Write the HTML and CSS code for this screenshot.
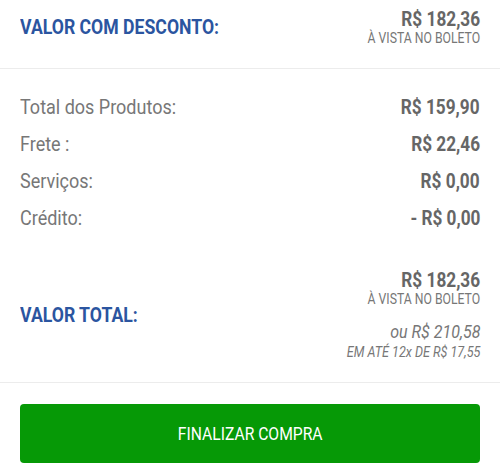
FILE: index.html
```html
<!DOCTYPE html>
<html lang="pt-BR">
<head>
    <meta charset="UTF-8">
    <meta name="viewport" content="width=device-width, initial-scale=1.0">
    <title>Resumo do pedido</title>
    <link rel="stylesheet" href="styles.css">
</head>
<body>
    <main class="summary">
        <section class="summary-head">
            <h2 class="summary-title">VALOR COM DESCONTO:</h2>
            <div class="price-block">
                <span class="price">R$ 182,36</span>
                <span class="price-note">À VISTA NO BOLETO</span>
            </div>
        </section>

        <section class="summary-rows">
            <div class="row">
                <span class="row-label">Total dos Produtos:</span>
                <span class="row-value">R$ 159,90</span>
            </div>
            <div class="row">
                <span class="row-label">Frete :</span>
                <span class="row-value">R$ 22,46</span>
            </div>
            <div class="row">
                <span class="row-label">Serviços:</span>
                <span class="row-value">R$ 0,00</span>
            </div>
            <div class="row">
                <span class="row-label">Crédito:</span>
                <span class="row-value">- R$ 0,00</span>
            </div>
        </section>

        <section class="summary-total">
            <h2 class="summary-title">VALOR TOTAL:</h2>
            <div class="price-block">
                <span class="price">R$ 182,36</span>
                <span class="price-note">À VISTA NO BOLETO</span>
                <span class="price-alt">ou R$ 210,58</span>
                <span class="price-installments">EM ATÉ 12x DE R$ 17,55</span>
            </div>
        </section>

        <div class="actions">
            <button type="button" class="checkout-button">
                <span class="checkout-label">FINALIZAR COMPRA</span>
            </button>
        </div>
    </main>
</body>
</html>
```

FILE: styles.css
```css
/* Roboto is only available in its normal width, so the condensed
   look of the original is approximated with a horizontal scale */
body {
    font-family: Roboto, "Noto Sans", sans-serif;
    background-color: #fff;
    margin: 0;
}

.summary {
    width: 500px;
}

.summary-head {
    display: flex;
    justify-content: space-between;
    align-items: center;
    padding: 8px 20px 22px;
    border-bottom: 1px solid #ececec;
}

.summary-title {
    margin: 0;
    font-size: 21px;
    font-weight: bold;
    color: #2b55a0;
    transform: scaleX(0.84);
    transform-origin: left center;
}

.price-block {
    display: flex;
    flex-direction: column;
    align-items: flex-end;
    text-align: right;
}

.price-block > span {
    transform-origin: right center;
}

.price {
    font-size: 21px;
    font-weight: bold;
    line-height: 22px;
    color: #666;
    transform: scaleX(0.82);
}

.price-note {
    font-size: 15px;
    line-height: 16px;
    color: #777;
    transform: scaleX(0.815);
}

.price-alt {
    margin-top: 15px;
    font-size: 18px;
    line-height: 20px;
    font-style: italic;
    color: #777;
    transform: scaleX(0.89);
}

.price-installments {
    margin-top: 2px;
    font-size: 14px;
    line-height: 16px;
    font-style: italic;
    color: #777;
    transform: scaleX(0.9);
}

.summary-rows {
    padding: 20px 20px 0;
}

.row {
    display: flex;
    justify-content: space-between;
    line-height: 37px;
    font-size: 20px;
}

.row-label {
    color: #777;
    transform: scaleX(0.9);
    transform-origin: left center;
}

.row-value {
    font-weight: bold;
    color: #666;
    transform: scaleX(0.86);
    transform-origin: right center;
}

.summary-total {
    display: flex;
    justify-content: space-between;
    align-items: center;
    padding: 32px 20px 22px;
    border-bottom: 1px solid #ececec;
}

.actions {
    padding: 21px 20px 0;
}

.checkout-button {
    display: block;
    width: 100%;
    height: 59px;
    border: none;
    border-radius: 4px;
    background-color: #069906;
    color: #fff;
    font-family: inherit;
    font-size: 18px;
    cursor: pointer;
}

.checkout-label {
    display: inline-block;
    transform: scaleX(0.87);
}
```
